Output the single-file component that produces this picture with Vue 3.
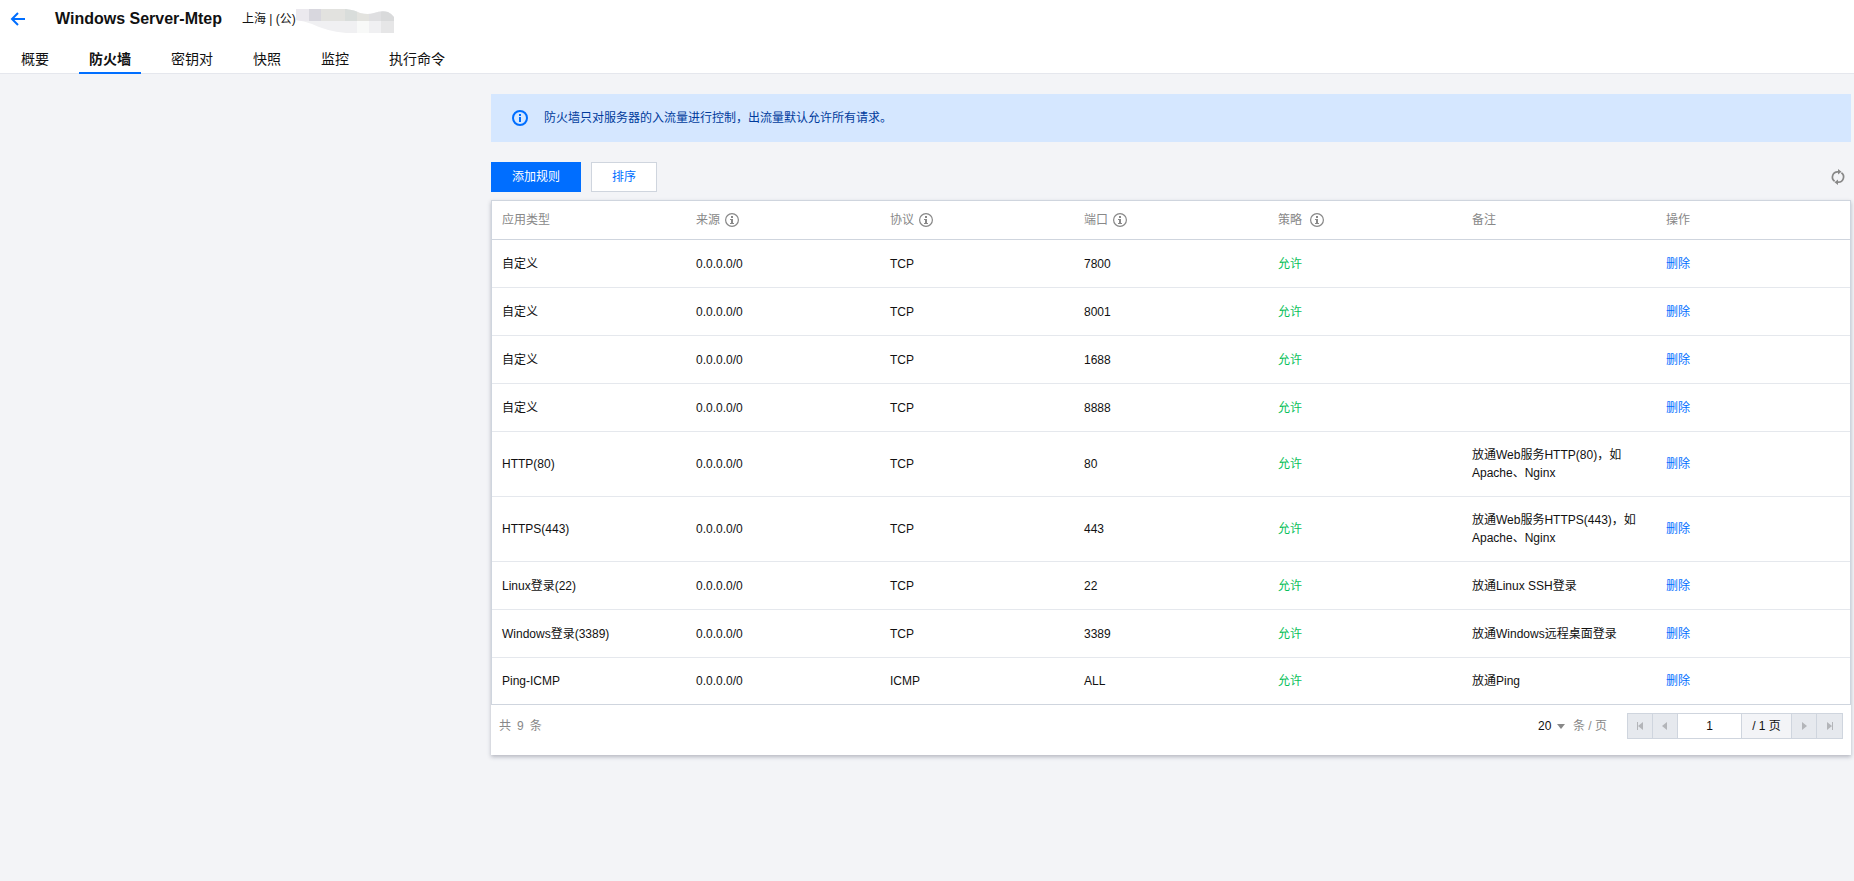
<template>
  <div class="page">
    <header class="header">
      <div class="title-bar">
        <a href="#" class="back" aria-label="返回">
          <svg width="16" height="16" viewBox="0 0 16 16">
            <path d="M8 2L2 8l6 6M2 8h13" fill="none" stroke="#006eff" stroke-width="2" />
          </svg>
        </a>
        <h1 class="title">Windows Server-Mtep</h1>
        <div class="region">
          <span>上海 | (公)</span>
          <svg width="98" height="28" viewBox="0 0 98 28">
            <clipPath id="ip-mask">
              <path d="M0 4h50q9 1 14 4q8 2 14 0q8-3 14-1q4 2 6 5v16H50Q30 26 16 19Q8 16 0 15z" />
            </clipPath>
            <g clip-path="url(#ip-mask)">
              <path d="M0 4h98v24H0z" fill="#f0f0f2" />
              <path d="M0 4h13v12H0z" fill="#ebe9ee" />
              <path d="M13 4h12v12H13z" fill="#d8d7de" />
              <path d="M25 4h24v12H25z" fill="#e2e2df" />
              <path d="M49 4h12v12H49z" fill="#d9dddb" />
              <path d="M61 4h12v12H61z" fill="#e3e3df" />
              <path d="M73 4h12v12H73z" fill="#dfdfe1" />
              <path d="M85 4h13v12H85z" fill="#d9dadb" />
              <path d="M61 16h12v12H61z" fill="#f8f9f8" />
              <path d="M85 16h13v12H85z" fill="#e6e6e7" />
            </g>
          </svg>
        </div>
      </div>
      <nav class="tabs">
        <a
          v-for="tab in tabs"
          :key="tab"
          href="#"
          class="tab"
          :class="{ active: tab === activeTab }"
          @click.prevent="activeTab = tab"
        >{{ tab }}</a>
      </nav>
    </header>

    <main class="content">
      <!-- 提示 -->
      <div class="alert">
        <svg width="16" height="16" viewBox="0 0 16 16">
          <circle cx="8" cy="8" r="7" fill="none" stroke="#006eff" stroke-width="2" />
          <path d="M7 4h2v2H7zM7 7h2v5H7z" fill="#006eff" />
        </svg>
        <p>防火墙只对服务器的入流量进行控制，出流量默认允许所有请求。</p>
      </div>

      <!-- 操作栏 -->
      <div class="toolbar">
        <button type="button" class="btn btn-primary">添加规则</button>
        <button type="button" class="btn">排序</button>
        <button type="button" class="refresh" aria-label="刷新">
          <svg width="16" height="16" viewBox="0 0 16 16">
            <path d="M4.6 12.2A5.2 5.2 0 0 1 8 2.8M11.4 3.8A5.2 5.2 0 0 1 8 13.200" fill="none" stroke="#888" stroke-width="1.7" />
            <path d="M8 0l3.500 2.800L8 5.600zM8 10.400l-3.500 2.800L8 16z" fill="#888" />
          </svg>
        </button>
      </div>

      <!-- 规则列表 -->
      <div class="card">
        <table class="rules">
          <thead>
            <tr>
              <th v-for="col in columns" :key="col.label">
                <span class="th-text" :class="{ wide: col.wide }">
                  {{ col.label }}
                  <svg v-if="col.info" width="14" height="14" viewBox="0 0 14 14">
                    <circle cx="7" cy="7" r="6.4" fill="none" stroke="#888" stroke-width="1.2" />
                    <path d="M6 3h2v2H6zM5 6h3v4h1v1H5v-1h1V7H5z" fill="#888" />
                  </svg>
                </span>
              </th>
            </tr>
          </thead>
          <tbody>
            <tr v-for="(rule, index) in rules" :key="index">
              <td>{{ rule.type }}</td>
              <td>{{ rule.source }}</td>
              <td>{{ rule.protocol }}</td>
              <td>{{ rule.port }}</td>
              <td class="allow">允许</td>
              <td>{{ rule.remark }}</td>
              <td><a href="#" class="link" @click.prevent="removeRule(index)">删除</a></td>
            </tr>
          </tbody>
        </table>

        <!-- 分页 -->
        <div class="footer">
          <div class="total">
            <span>共</span>
            <span>{{ rules.length }}</span>
            <span>条</span>
          </div>
          <div class="page-size">
            <div class="size-box">
              <select v-model="pageSize" aria-label="每页条数">
                <option :value="10">10</option>
                <option :value="20">20</option>
                <option :value="50">50</option>
              </select>
              <svg width="8" height="5" viewBox="0 0 8 5"><path d="M0 0h8L4 5z" fill="#888" /></svg>
            </div>
            <span>条 / 页</span>
          </div>
          <div class="pager">
            <button type="button" disabled aria-label="第一页">
              <svg width="8" height="8" viewBox="0 0 8 8"><path d="M1 0h1v8H1zM7 0v8L2 4z" fill="#b3b5b9" /></svg>
            </button>
            <button type="button" disabled aria-label="上一页">
              <svg width="8" height="8" viewBox="0 0 8 8"><path d="M6 0v8L1 4z" fill="#b3b5b9" /></svg>
            </button>
            <input v-model="page" type="text" aria-label="页码">
            <span class="page-count">/ 1 页</span>
            <button type="button" disabled aria-label="下一页">
              <svg width="8" height="8" viewBox="0 0 8 8"><path d="M2 0v8l5-4z" fill="#b3b5b9" /></svg>
            </button>
            <button type="button" disabled aria-label="最后一页">
              <svg width="8" height="8" viewBox="0 0 8 8"><path d="M6 0h1v8H6zM1 0v8l5-4z" fill="#b3b5b9" /></svg>
            </button>
          </div>
        </div>
      </div>
    </main>
  </div>
</template>

<script setup>
import { ref } from 'vue'

const tabs = ['概要', '防火墙', '密钥对', '快照', '监控', '执行命令']
const activeTab = ref('防火墙')

const page = ref('1')
const pageSize = ref(20)

const columns = [
  { label: '应用类型' },
  { label: '来源', info: true },
  { label: '协议', info: true },
  { label: '端口', info: true },
  { label: '策略', info: true, wide: true },
  { label: '备注' },
  { label: '操作' }
]

const rules = ref([
  { type: '自定义', source: '0.0.0.0/0', protocol: 'TCP', port: '7800', remark: '' },
  { type: '自定义', source: '0.0.0.0/0', protocol: 'TCP', port: '8001', remark: '' },
  { type: '自定义', source: '0.0.0.0/0', protocol: 'TCP', port: '1688', remark: '' },
  { type: '自定义', source: '0.0.0.0/0', protocol: 'TCP', port: '8888', remark: '' },
  { type: 'HTTP(80)', source: '0.0.0.0/0', protocol: 'TCP', port: '80', remark: '放通Web服务HTTP(80)，如 Apache、Nginx' },
  { type: 'HTTPS(443)', source: '0.0.0.0/0', protocol: 'TCP', port: '443', remark: '放通Web服务HTTPS(443)，如 Apache、Nginx' },
  { type: 'Linux登录(22)', source: '0.0.0.0/0', protocol: 'TCP', port: '22', remark: '放通Linux SSH登录' },
  { type: 'Windows登录(3389)', source: '0.0.0.0/0', protocol: 'TCP', port: '3389', remark: '放通Windows远程桌面登录' },
  { type: 'Ping-ICMP', source: '0.0.0.0/0', protocol: 'ICMP', port: 'ALL', remark: '放通Ping' }
])

const removeRule = (index) => {
  rules.value.splice(index, 1)
}
</script>

<style>
body {
  background: #f3f4f7;
}
</style>

<style scoped>
.page {
  font-family: "Liberation Sans", "Noto Sans CJK SC", sans-serif;
  font-size: 12px;
  line-height: 18px;
  color: #111;
}

a {
  text-decoration: none;
}

button,
input,
select {
  box-sizing: border-box;
  margin: 0;
  padding: 0;
  font: inherit;
  color: inherit;
  border-radius: 0;
}

button {
  cursor: pointer;
}

svg {
  display: block;
  flex: none;
}

/* 顶部 */
.header {
  background: #fff;
  border-bottom: 1px solid #e5e7ed;
}

.title-bar {
  display: flex;
  align-items: center;
  height: 38px;
  padding-left: 10px;
}

.title {
  margin: 0 20px 0 29px;
  font-size: 16px;
  line-height: 20px;
}

.region {
  display: flex;
  align-items: center;
}

.tabs {
  display: flex;
  gap: 20px;
  height: 35px;
  padding-left: 11px;
}

.tab {
  padding: 0 10px;
  margin-bottom: -1px;
  font-size: 14px;
  line-height: 42px;
  height: 34px;
  border-bottom: 2px solid transparent;
  color: #111;
}

.tab.active {
  font-weight: 700;
  border-bottom-color: #006eff;
}

/* 内容 */
.content {
  padding: 20px 3px 20px 491px;
}

.alert {
  display: flex;
  align-items: center;
  gap: 16px;
  padding: 15px 21px;
  background: #d5e7ff;
  color: #003b9c;
}

.alert p {
  margin: 0;
}

.toolbar {
  display: flex;
  align-items: center;
  gap: 10px;
  margin: 20px 0 8px;
}

.btn {
  height: 30px;
  padding: 0 20px;
  border: 1px solid #cfd5de;
  background: #fff;
  color: #006eff;
}

.btn-primary {
  border-color: #006eff;
  background: #006eff;
  color: #fff;
}

.refresh {
  margin: 0 5px 0 auto;
  border: none;
  background: none;
}

.card {
  background: #fff;
  box-shadow: 0 2px 4px rgba(54, 58, 80, 0.32);
}

.rules {
  width: 100%;
  table-layout: fixed;
  border: 1px solid #cfd5de;
  border-spacing: 0;
}

.rules th,
.rules td {
  box-sizing: border-box;
  height: 48px;
  padding: 14px 10px;
  border-bottom: 1px solid #e5e8ed;
  text-align: left;
  vertical-align: middle;
}

.rules th {
  height: 39px;
  padding: 10px;
  border-bottom-color: #cfd5de;
  font-weight: 400;
  color: #888;
}

.rules tr:last-child td {
  height: 46px;
  border-bottom: none;
}

.th-text {
  display: flex;
  align-items: center;
  gap: 5px;
}

.th-text.wide {
  gap: 8px;
}

.rules .allow {
  color: #0abf5b;
}

.link {
  color: #006eff;
}

/* 分页 */
.footer {
  display: flex;
  align-items: flex-start;
  padding: 8px 8px 16px;
}

.total {
  display: flex;
  gap: 6px;
  margin-right: auto;
  line-height: 26px;
  color: #888;
}

.page-size {
  display: flex;
  gap: 8px;
  margin-right: 20px;
  line-height: 26px;
  color: #888;
}

.size-box {
  display: flex;
  align-items: center;
  gap: 5px;
  color: #111;
}

.size-box select {
  appearance: none;
  border: none;
  background: none;
}

.pager {
  display: flex;
  border: 1px solid #cfd5de;
}

.pager > * {
  box-sizing: border-box;
  height: 24px;
  border: none;
  border-right: 1px solid #cfd5de;
}

.pager > :last-child {
  border-right: none;
}

.pager button {
  display: flex;
  align-items: center;
  justify-content: center;
  width: 25px;
  background: #e6e9ee;
}

.pager input {
  width: 64px;
  background: #fff;
  text-align: center;
}

.page-count {
  width: 50px;
  line-height: 24px;
  background: #f3f4f7;
  text-align: center;
}
</style>
